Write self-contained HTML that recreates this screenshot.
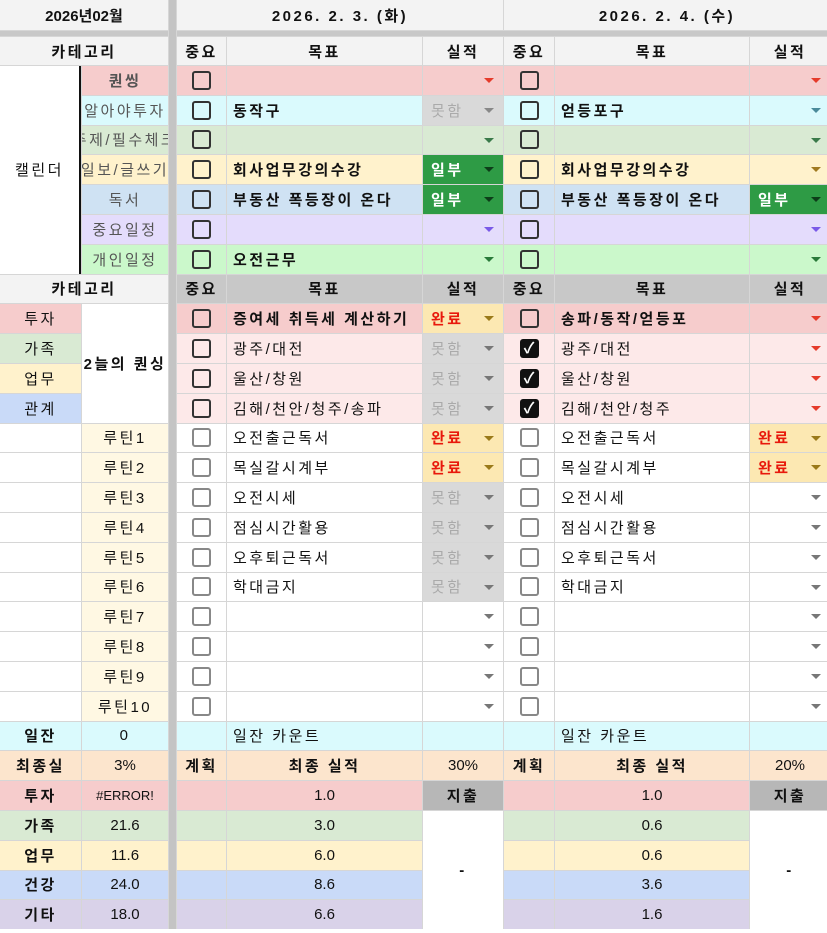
<!DOCTYPE html>
<html><head><meta charset="utf-8"><style>
*{margin:0;padding:0;box-sizing:border-box}
body{width:827px;height:933px;background:#fff;overflow:hidden;font-family:"Liberation Sans","Noto Sans CJK KR",sans-serif;font-size:15px;color:#111;letter-spacing:2.5px}
.g{display:grid;grid-template-columns:81px 86px 7px 49px 195px 80px 50px 194px 80px;grid-template-rows:30px 5px 28px repeat(29,28.8px);gap:1px;background:#d6d6d6;width:827px}
.g>div{background:#fff;position:relative;display:flex;align-items:center;overflow:hidden;white-space:nowrap}
.sep{grid-column:3;grid-row:1/-1;background:#c4c4c4!important}
.c{justify-content:center}.b{font-weight:bold}.l{padding-left:6px}
.h{background:#f3f3f3!important;font-weight:bold;justify-content:center}
.gh{background:#c8c8c8!important;font-weight:bold;justify-content:center}
.band{background:#c8c8c8!important}
.cb::after{content:"";width:19px;height:19px;border:2.5px solid #333;border-radius:3px;box-sizing:border-box}
.cl::after{border-color:#888;border-width:2px}
.ck{justify-content:center}
.ck::after{content:"✓";width:19px;height:19px;background:#111;color:#fff;border-radius:3px;font-size:15px;line-height:19px;text-align:center;font-weight:bold;letter-spacing:0}
.cb{justify-content:center}
.dd::after{content:"";position:absolute;right:9px;top:12px;border-left:5px solid transparent;border-right:5px solid transparent;border-top:5px solid var(--a,#777)}
.gy{color:#aaa;padding-left:8px}
.mh{background:#d9d9d9!important}
.wd{background:#fce8b2!important;color:#e8190c;font-weight:bold;padding-left:8px;--a:#9a7a1a}
.ib{background:#2e9b45!important;color:#fff;font-weight:bold;padding-left:8px;--a:#0d3d19}
.p1{background:#f6cccc!important}.p2{background:#dafafd!important}.p3{background:#d9ead3!important}.p4{background:#fff2cc!important}.p5{background:#cfe2f3!important}.p6{background:#e4dcfc!important}.p7{background:#cbf8cb!important}
.lp{background:#fde9e9!important}.cr{background:#fff8e3!important}
.bl{background:#c9daf8!important}.pu{background:#d9d2e9!important}.pe{background:#fce5cd!important}
.sg{color:#555}
.n{letter-spacing:0}
</style></head><body>
<div class="g">
<div class="sep"></div>
<div class="h n" style="grid-column:span 2">2026년02월</div>
<div class="h" style="grid-column:span 3">2026. 2. 3. (화)</div>
<div class="h" style="grid-column:span 3">2026. 2. 4. (수)</div>
<div class="band" style="grid-column:span 2"></div>
<div class="band" style="grid-column:span 6"></div>
<div class="h" style="grid-column:span 2">카테고리</div>
<div class="h">중요</div><div class="h">목표</div><div class="h">실적</div><div class="h">중요</div><div class="h">목표</div><div class="h">실적</div>

<div class="c" style="grid-row:span 7;border-right:2px solid #111">캘린더</div>
<div class="c p1 sg b">퀀씽</div><div class="cb p1"></div><div class="p1"></div><div class="p1 dd" style="--a:#e53b2b"></div><div class="cb p1"></div><div class="p1"></div><div class="p1 dd" style="--a:#e53b2b"></div>
<div class="c p2 sg">알아야투자</div><div class="cb p2"></div><div class="p2 l b">동작구</div><div class="mh gy dd" style="--a:#888">못함</div><div class="cb p2"></div><div class="p2 l b">얻등포구</div><div class="p2 dd" style="--a:#4a8a9a"></div>
<div class="c p3 sg">주제/필수체크</div><div class="cb p3"></div><div class="p3"></div><div class="p3 dd" style="--a:#3a7a4a"></div><div class="cb p3"></div><div class="p3"></div><div class="p3 dd" style="--a:#3a7a4a"></div>
<div class="c p4 sg">일보/글쓰기</div><div class="cb p4"></div><div class="p4 l b">회사업무강의수강</div><div class="ib dd">일부</div><div class="cb p4"></div><div class="p4 l b">회사업무강의수강</div><div class="p4 dd" style="--a:#a07a20"></div>
<div class="c p5 sg">독서</div><div class="cb p5"></div><div class="p5 l b">부동산 폭등장이 온다</div><div class="ib dd">일부</div><div class="cb p5"></div><div class="p5 l b">부동산 폭등장이 온다</div><div class="ib dd">일부</div>
<div class="c p6 sg">중요일정</div><div class="cb p6"></div><div class="p6"></div><div class="p6 dd" style="--a:#7a5ae8"></div><div class="cb p6"></div><div class="p6"></div><div class="p6 dd" style="--a:#7a5ae8"></div>
<div class="c p7 sg">개인일정</div><div class="cb p7"></div><div class="p7 l b">오전근무</div><div class="p7 dd" style="--a:#2a7a3a"></div><div class="cb p7"></div><div class="p7"></div><div class="p7 dd" style="--a:#2a7a3a"></div>

<div class="h" style="grid-column:span 2">카테고리</div>
<div class="gh">중요</div><div class="gh">목표</div><div class="gh">실적</div><div class="gh">중요</div><div class="gh">목표</div><div class="gh">실적</div>

<div class="c p1">투자</div><div class="b c" style="grid-row:span 4">2늘의 퀀싱</div>
<div class="cb p1"></div><div class="p1 l b">증여세 취득세 계산하기</div><div class="wd dd">완료</div><div class="cb p1"></div><div class="p1 l b">송파/동작/얻등포</div><div class="p1 dd" style="--a:#e53b2b"></div>
<div class="c p3">가족</div><div class="cb lp"></div><div class="lp l">광주/대전</div><div class="mh gy dd">못함</div><div class="ck lp"></div><div class="lp l">광주/대전</div><div class="lp dd" style="--a:#e53b2b"></div>
<div class="c p4">업무</div><div class="cb lp"></div><div class="lp l">울산/창원</div><div class="mh gy dd">못함</div><div class="ck lp"></div><div class="lp l">울산/창원</div><div class="lp dd" style="--a:#e53b2b"></div>
<div class="c bl">관계</div><div class="cb lp"></div><div class="lp l">김해/천안/청주/송파</div><div class="mh gy dd">못함</div><div class="ck lp"></div><div class="lp l">김해/천안/청주</div><div class="lp dd" style="--a:#e53b2b"></div>

<div></div><div class="c cr">루틴1</div><div class="cb cl"></div><div class="l">오전출근독서</div><div class="wd dd">완료</div><div class="cb cl"></div><div class="l">오전출근독서</div><div class="wd dd">완료</div>
<div></div><div class="c cr">루틴2</div><div class="cb cl"></div><div class="l">목실갈시계부</div><div class="wd dd">완료</div><div class="cb cl"></div><div class="l">목실갈시계부</div><div class="wd dd">완료</div>
<div></div><div class="c cr">루틴3</div><div class="cb cl"></div><div class="l">오전시세</div><div class="mh gy dd">못함</div><div class="cb cl"></div><div class="l">오전시세</div><div class="dd"></div>
<div></div><div class="c cr">루틴4</div><div class="cb cl"></div><div class="l">점심시간활용</div><div class="mh gy dd">못함</div><div class="cb cl"></div><div class="l">점심시간활용</div><div class="dd"></div>
<div></div><div class="c cr">루틴5</div><div class="cb cl"></div><div class="l">오후퇴근독서</div><div class="mh gy dd">못함</div><div class="cb cl"></div><div class="l">오후퇴근독서</div><div class="dd"></div>
<div></div><div class="c cr">루틴6</div><div class="cb cl"></div><div class="l">학대금지</div><div class="mh gy dd">못함</div><div class="cb cl"></div><div class="l">학대금지</div><div class="dd"></div>
<div></div><div class="c cr">루틴7</div><div class="cb cl"></div><div></div><div class="dd"></div><div class="cb cl"></div><div></div><div class="dd"></div>
<div></div><div class="c cr">루틴8</div><div class="cb cl"></div><div></div><div class="dd"></div><div class="cb cl"></div><div></div><div class="dd"></div>
<div></div><div class="c cr">루틴9</div><div class="cb cl"></div><div></div><div class="dd"></div><div class="cb cl"></div><div></div><div class="dd"></div>
<div></div><div class="c cr">루틴10</div><div class="cb cl"></div><div></div><div class="dd"></div><div class="cb cl"></div><div></div><div class="dd"></div>

<div class="c p2 b">일잔</div><div class="c p2">0</div><div class="p2"></div><div class="p2 l">일잔 카운트</div><div class="p2"></div><div class="p2"></div><div class="p2 l">일잔 카운트</div><div class="p2"></div>
<div class="c pe b">최종실</div><div class="c pe n">3%</div><div class="c pe b">계획</div><div class="c pe b">최종 실적</div><div class="c pe n">30%</div><div class="c pe b">계획</div><div class="c pe b">최종 실적</div><div class="c pe n">20%</div>
<div class="c p1 b">투자</div><div class="c p1 n" style="font-size:13px">#ERROR!</div><div class="p1"></div><div class="c p1 n">1.0</div><div class="c b" style="background:#b7b7b7">지출</div><div class="p1"></div><div class="c p1 n">1.0</div><div class="c b" style="background:#b7b7b7">지출</div>
<div class="c p3 b">가족</div><div class="c p3 n">21.6</div><div class="p3"></div><div class="c p3 n">3.0</div><div class="c b" style="grid-row:span 4">-</div><div class="p3"></div><div class="c p3 n">0.6</div><div class="c b" style="grid-row:span 4">-</div>
<div class="c p4 b">업무</div><div class="c p4 n">11.6</div><div class="p4"></div><div class="c p4 n">6.0</div><div class="p4"></div><div class="c p4 n">0.6</div>
<div class="c bl b">건강</div><div class="c bl n">24.0</div><div class="bl"></div><div class="c bl n">8.6</div><div class="bl"></div><div class="c bl n">3.6</div>
<div class="c pu b">기타</div><div class="c pu n">18.0</div><div class="pu"></div><div class="c pu n">6.6</div><div class="pu"></div><div class="c pu n">1.6</div>
</div>
</body></html>
